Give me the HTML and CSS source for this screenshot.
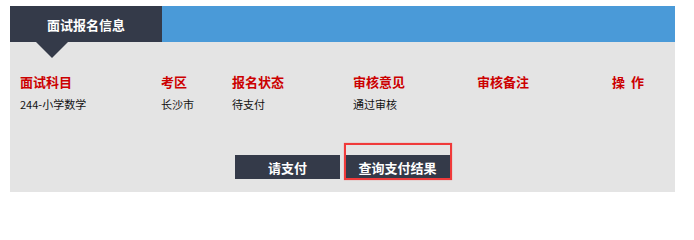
FILE: index.html
```html
<!DOCTYPE html>
<html>
<head>
<meta charset="utf-8">
<link rel="stylesheet" href="styles.css">
</head>
<body>
<div class="panel">
  <div class="bar">
    <div class="tab">面试报名信息<span class="arrow"></span></div>
  </div>
  <div class="content">
    <div class="grid head">
      <div>面试科目</div>
      <div>考区</div>
      <div>报名状态</div>
      <div>审核意见</div>
      <div>审核备注</div>
      <div>操&nbsp;&nbsp;作</div>
    </div>
    <div class="grid row">
      <div>244-小学数学</div>
      <div>长沙市</div>
      <div>待支付</div>
      <div>通过审核</div>
      <div></div>
      <div></div>
    </div>
    <div class="actions">
      <div class="btn">请支付</div>
      <div class="btn marked">查询支付结果<span class="mark"></span></div>
    </div>
  </div>
</div>
</body>
</html>
```
FILE: styles.css
```css
html, body { margin: 0; padding: 0; background: #fff; }
body { font-family: "Noto Sans CJK SC", "DejaVu Sans", sans-serif; }
.panel { margin: 6px 0 0 10px; width: 665px; background: #e4e4e4; }
.bar { height: 36px; background: #4a9ad8; display: flex; }
.tab { position: relative; width: 152px; background: #343a49; color: #fff; font-size: 13px; font-weight: bold; display: flex; align-items: center; justify-content: center; }
.arrow { position: absolute; left: 26px; top: 36px; width: 0; height: 0; border-left: 16px solid transparent; border-right: 16px solid transparent; border-top: 16px solid #343a49; }
.content { padding: 31px 0 13px 10px; }
.grid { display: grid; grid-template-columns: 141px 71px 121px 124px 135px 1fr; }
.head { color: #cc0000; font-size: 13px; font-weight: bold; line-height: 18px; }
.row { color: #111; font-size: 11px; line-height: 16px; margin-top: 5px; }
.actions { display: flex; justify-content: center; gap: 5px; margin-top: 43px; margin-left: -10px; }
.btn { width: 105px; height: 24px; background: #343a49; color: #fff; font-size: 13px; font-weight: bold; display: flex; align-items: center; justify-content: center; }
.marked { position: relative; }
.mark { position: absolute; left: -1px; top: -12px; width: 104px; height: 33px; border: 2px solid #f03a3a; box-shadow: 0 0 1px rgba(240,58,58,0.6); }
```
